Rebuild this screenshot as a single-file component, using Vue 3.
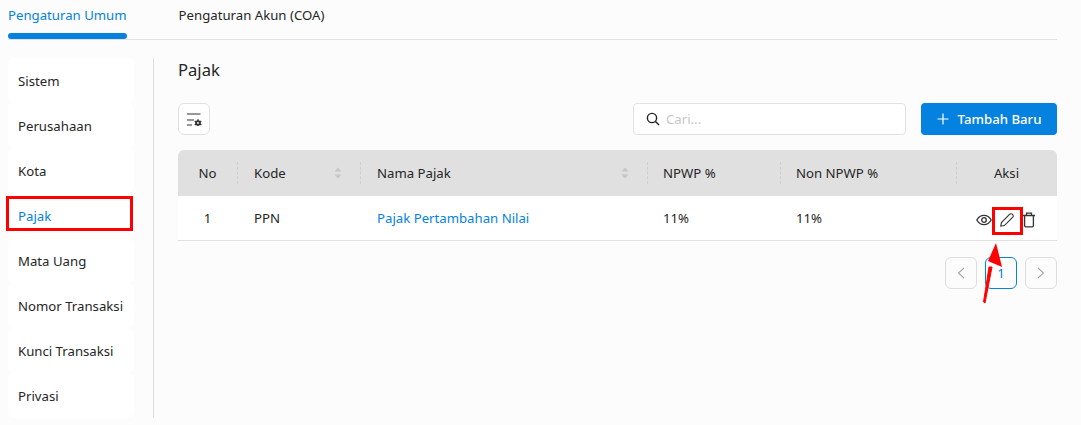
<script setup>
const menus = ['Sistem', 'Perusahaan', 'Kota', 'Pajak', 'Mata Uang', 'Nomor Transaksi', 'Kunci Transaksi', 'Privasi']
</script>

<template>
  <div class="page">
    <div class="tabs">
      <div class="tab active">Pengaturan Umum</div>
      <div class="tab">Pengaturan Akun (COA)</div>
    </div>

    <div class="body">
      <div class="sidebar">
        <div v-for="m in menus" :key="m" class="menuItem" :class="{ selected: m == 'Pajak' }">
          {{ m }}
          <div v-if="m == 'Pajak'" class="redBox"></div>
        </div>
      </div>

      <div class="content">
        <h1>Pajak</h1>

        <div class="toolbar">
          <div class="filterBtn">
            <svg width="16" height="14" viewBox="0 0 16 14">
              <path d="M1 2H14.5M1 8H8M1 13H6" stroke="#333" stroke-width="1.2" fill="none" />
              <path d="M12 7.2V14.8M8.7 9.1L15.3 12.9M8.7 12.9L15.3 9.1" stroke="#333" stroke-width="1.3" />
              <circle cx="12" cy="11" r="2.8" fill="#333" />
              <circle cx="12" cy="11" r="0.9" fill="#fff" />
            </svg>
          </div>
          <div class="spacer"></div>
          <div class="search">
            <svg width="14" height="14" viewBox="0 0 14 14">
              <circle cx="6" cy="6" r="4.6" stroke="#222" stroke-width="1.4" fill="none" />
              <path d="M9.5 9.5L13 13" stroke="#222" stroke-width="1.4" />
            </svg>
            <span>Cari...</span>
          </div>
          <div class="addBtn">
            <svg width="12" height="12" viewBox="0 0 12 12">
              <path d="M6 .5V11.5M.5 6H11.5" stroke="#fff" stroke-width="1.2" />
            </svg>
            <span>Tambah Baru</span>
          </div>
        </div>

        <div class="table">
          <div class="row head">
            <div class="cell cNo center">No</div>
            <div class="cell cKode sep">Kode
              <svg class="sort" width="8" height="12" viewBox="0 0 8 12">
                <path d="M4 0.5L7.5 4.5H0.5Z M4 11.5L0.5 7.5H7.5Z" fill="#c6c6c6" />
              </svg>
            </div>
            <div class="cell cNama sep">Nama Pajak
              <svg class="sort" width="8" height="12" viewBox="0 0 8 12">
                <path d="M4 0.5L7.5 4.5H0.5Z M4 11.5L0.5 7.5H7.5Z" fill="#c6c6c6" />
              </svg>
            </div>
            <div class="cell cNpwp sep">NPWP %</div>
            <div class="cell cNon sep">Non NPWP %</div>
            <div class="cell cAksi sep center">Aksi</div>
          </div>

          <div class="row data">
            <div class="cell cNo center">1</div>
            <div class="cell cKode">PPN</div>
            <div class="cell cNama link">Pajak Pertambahan Nilai</div>
            <div class="cell cNpwp">11%</div>
            <div class="cell cNon">11%</div>
            <div class="cell cAksi actions">
              <svg width="16" height="16" viewBox="0 0 16 16">
                <path d="M0.8 8C2.6 4.8 5 3.4 8 3.4S13.4 4.8 15.2 8C13.4 11.2 11 12.6 8 12.6S2.6 11.2 .8 8Z" stroke="#333" stroke-width="1.3" fill="none" />
                <circle cx="8" cy="8" r="2.3" stroke="#333" stroke-width="1.3" fill="none" />
              </svg>
              <div class="editWrap">
                <svg width="16" height="16" viewBox="0 0 16 16">
                  <path d="M1.8 14.2L2.4 10.6L10.8 2.2C11.5 1.5 12.5 1.5 13.2 2.2L13.8 2.8C14.5 3.5 14.5 4.5 13.8 5.2L5.4 13.6Z" stroke="#333" stroke-width="1.1" fill="none" />
                </svg>
              </div>
              <svg width="14" height="16" viewBox="0 0 14 16">
                <path d="M1 3.5H13M4.5 3.5V1.2H9.5V3.5M2.6 3.5V13.6C2.6 14.4 3.1 14.8 3.8 14.8H10.2C10.9 14.8 11.4 14.4 11.4 13.6V3.5" stroke="#333" stroke-width="1.3" fill="none" />
              </svg>
            </div>
          </div>
        </div>

        <div class="pager">
          <div class="pageBtn muted">
            <svg width="8" height="12" viewBox="0 0 8 12"><path d="M7 1L1.5 6L7 11" stroke="#a8a8a8" stroke-width="1.1" fill="none" /></svg>
          </div>
          <div class="pageBtn current">1</div>
          <div class="pageBtn muted">
            <svg width="8" height="12" viewBox="0 0 8 12"><path d="M1 1L6.5 6L1 11" stroke="#a8a8a8" stroke-width="1.1" fill="none" /></svg>
          </div>
        </div>
      </div>
    </div>

    <svg class="arrow" width="24" height="64" viewBox="0 0 24 64">
      <path d="M3.5 59L9 24L12 24L5 60Z" fill="#f00" stroke="#f00" stroke-width="1" stroke-linejoin="round" />
      <path d="M16 0L22 24L8 18Z" fill="#f00" />
    </svg>
  </div>
</template>

<style>
html, body {
  margin: 0;
  background: #fcfcfc;
}
</style>

<style scoped>
.page {
  position: relative;
  width: 1081px;
  height: 425px;
  overflow: hidden;
  background: #fcfcfc;
  font-family: "Noto Sans", sans-serif;
  font-size: 13.2px;
  color: #262626;
}

.tabs {
  display: flex;
  gap: 52px;
  height: 39px;
  margin-left: 8px;
  margin-right: 24px;
  border-bottom: 1px solid #e2e2e2;
}

.tab {
  position: relative;
  height: 39px;
  line-height: 30px;
}

.tab.active {
  color: #0582e0;
}

.tab.active::after {
  content: "";
  position: absolute;
  left: 0;
  right: 0;
  bottom: 0;
  height: 6px;
  border-radius: 3px;
  background: #0582e0;
}

.body {
  display: flex;
  padding: 18px 24px 0 8px;
}

.sidebar {
  width: 126px;
  height: 360px;
  padding-right: 19px;
  border-right: 1px solid #e0e0e0;
}

.menuItem {
  position: relative;
  height: 45px;
  line-height: 46px;
  padding-left: 10px;
  background: #fff;
  border-radius: 6px;
}

.menuItem.selected {
  color: #0582e0;
}

.redBox {
  position: absolute;
  left: -2px;
  top: 3px;
  width: 127px;
  height: 35px;
  border: 3px solid #f00;
  box-sizing: border-box;
}

.content {
  flex: 1;
  padding-left: 24px;
}

h1 {
  margin: 0;
  font-size: 16.6px;
  font-weight: 400;
  line-height: 24px;
}

.toolbar {
  display: flex;
  align-items: center;
  margin-top: 21px;
  height: 32px;
}

.spacer {
  flex: 1;
}

.filterBtn {
  display: flex;
  align-items: center;
  justify-content: center;
  width: 30px;
  height: 30px;
  border: 1px solid #e2e2e2;
  border-radius: 6px;
  background: #fff;
}

.search {
  display: flex;
  align-items: center;
  gap: 6px;
  box-sizing: border-box;
  width: 273px;
  height: 32px;
  padding-left: 12px;
  margin-right: 15px;
  border: 1px solid #e2e2e2;
  border-radius: 4px;
  background: #fff;
  color: #c8c8c8;
}

.addBtn {
  display: flex;
  align-items: center;
  justify-content: center;
  gap: 9px;
  width: 136px;
  height: 32px;
  border-radius: 4px;
  background: #0582e0;
  color: #fff;
  font-weight: 500;
}

.table {
  margin-top: 15px;
}

.row {
  display: flex;
  align-items: center;
}

.head {
  height: 46px;
  background: #e0e0e0;
  border-radius: 6px 6px 0 0;
  line-height: 20px;
}

.data {
  height: 44px;
  background: #fff;
  border-bottom: 1px solid #e2e2e2;
}

.cell {
  position: relative;
  box-sizing: border-box;
  padding-left: 17px;
}

.center {
  padding-left: 0;
  text-align: center;
}

.sep::before {
  content: "";
  position: absolute;
  left: 0;
  top: -1px;
  height: 22px;
  border-left: 1px dashed #cfcfcf;
}

.sort {
  position: absolute;
  right: 18px;
  top: 4px;
}

.cNo { width: 59px; }
.cKode { width: 123px; }
.cNama { width: 287px; }
.cNpwp { width: 133px; padding-left: 16px; }
.cNon { width: 176px; padding-left: 16px; }
.cAksi { width: 101px; padding-left: 0; }

.link {
  color: #0582e0;
}

.actions {
  display: flex;
  align-items: center;
  justify-content: flex-end;
  gap: 7px;
  padding-right: 21px;
  top: 2px;
}

.editWrap {
  position: relative;
  display: flex;
  width: 16px;
  height: 16px;
}

.editWrap::after {
  content: "";
  position: absolute;
  left: -7px;
  top: -5px;
  width: 31px;
  height: 28px;
  box-sizing: border-box;
  border: 3px solid #f00;
}

.pager {
  display: flex;
  justify-content: flex-end;
  gap: 8px;
  margin-top: 16px;
}

.pageBtn {
  display: flex;
  align-items: center;
  justify-content: center;
  box-sizing: border-box;
  width: 32px;
  height: 32px;
  border: 1px solid #dedede;
  border-radius: 6px;
  background: #fcfcfc;
}

.pageBtn.current {
  border-color: #0582e0;
  color: #0582e0;
}

.arrow {
  position: absolute;
  left: 980px;
  top: 243px;
}
</style>
